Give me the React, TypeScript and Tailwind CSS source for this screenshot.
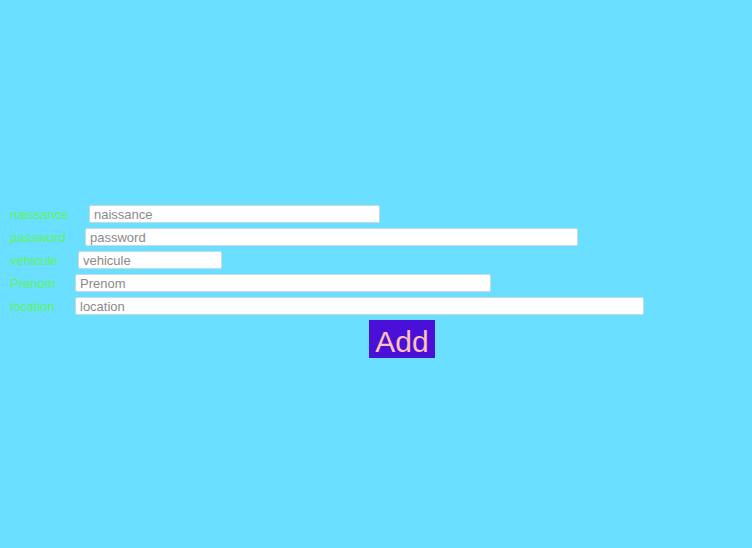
const rows = [
  { label: 'naissance', labelW: 'w-[79px]', inputW: 'w-[291px]' },
  { label: 'password', labelW: 'w-[75px]', inputW: 'w-[493px]' },
  { label: 'vehicule', labelW: 'w-[68px]', inputW: 'w-[144px]' },
  { label: 'Prenom', labelW: 'w-[65px]', inputW: 'w-[416px]' },
  { label: 'location', labelW: 'w-[65px]', inputW: 'w-[569px]' },
];

export default function App() {
  return (
    <div className="min-h-[548px] w-full bg-[#6adfff] pt-[202px] pl-[10px] font-['Liberation_Sans',Arial,sans-serif]">
      <form className="flex flex-col" onSubmit={(e) => e.preventDefault()}>
        {rows.map((r) => (
          <div key={r.label} className="flex h-[23px] items-center">
            <label className={`${r.labelW} pt-[3px] text-[13px] text-[#5cf55c]`}>{r.label}</label>
            <input
              placeholder={r.label}
              className={`${r.inputW} h-[18px] rounded-[2px] border border-[#c8d8e0] bg-white px-[4px] pt-[2px] text-[13px] text-black outline-none placeholder:text-[#8a8a8a]`}
            />
          </div>
        ))}
        <div className="mt-[3px] pl-[359px]">
          <button
            type="submit"
            className="flex h-[38px] w-[66px] items-center justify-center bg-[#4a0fd8] pt-[5px] text-[30px] leading-none text-[#fcc4b0]"
          >
            Add
          </button>
        </div>
      </form>
    </div>
  );
}
